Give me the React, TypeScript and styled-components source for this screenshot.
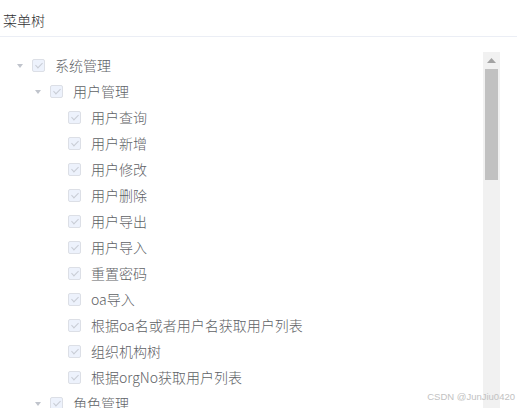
import React from "react";
import styled, { createGlobalStyle } from "styled-components";

const Global = createGlobalStyle`
  html, body { margin: 0; padding: 0; background: #fff; overflow: hidden; }
  body { font-family: "Liberation Sans", "Noto Sans CJK SC", sans-serif; }
`;

const Page = styled.div`
  position: relative;
  width: 517px;
  height: 408px;
  overflow: hidden;
  display: flex;
  flex-direction: column;
`;

const Header = styled.div`
  height: 37px;
  box-sizing: border-box;
  border-bottom: 1px solid #ebeef5;
  padding: 10px 0 0 3px;
  font-size: 14px;
  line-height: 20px;
  color: #303133;
  font-weight: 300;
  font-family: "Noto Sans CJK SC", sans-serif;
`;

const Body = styled.div`
  flex: 1;
  display: flex;
  padding-top: 15px;
  min-height: 0;
`;

const TreeArea = styled.div`
  width: 483px;
  overflow: hidden;
`;

const Scrollbar = styled.div`
  width: 17px;
  background: #f1f1f1;
  display: flex;
  flex-direction: column;
  align-items: center;
`;

const ArrowBtn = styled.div`
  height: 17px;
  width: 17px;
  display: flex;
  align-items: center;
  justify-content: center;
`;

const Thumb = styled.div`
  width: 13px;
  height: 111px;
  background: #c1c1c1;
`;

const Row = styled.div<{ $level: number }>`
  height: 26px;
  display: flex;
  align-items: center;
  padding-left: ${(p) => p.$level * 18 + 8}px;
  font-family: "Noto Sans CJK SC", sans-serif;
  font-weight: 300;
  font-size: 14px;
  color: #606266;
  white-space: nowrap;
`;

const Expand = styled.span<{ $leaf: boolean }>`
  width: 24px;
  height: 24px;
  display: flex;
  align-items: center;
  justify-content: center;
  visibility: ${(p) => (p.$leaf ? "hidden" : "visible")};
`;

const Caret = styled.span`
  width: 0;
  height: 0;
  border-left: 3.5px solid transparent;
  border-right: 3.5px solid transparent;
  border-top: 4px solid #c0c4cc;
  margin-top: 1px;
`;

const Check = styled.span`
  position: relative;
  width: 13px;
  height: 13px;
  box-sizing: border-box;
  border: 1px solid #dcdfe6;
  border-radius: 2px;
  background: #edf2fc;
  margin-right: 10px;
  flex-shrink: 0;
  &::after {
    content: "";
    position: absolute;
    left: 4px;
    top: 1px;
    width: 3px;
    height: 6px;
    border: 1px solid #c8ccd4;
    border-left: 0;
    border-top: 0;
    transform: rotate(45deg);
  }
`;

const Label = styled.span`
  line-height: 26px;
`;

const Watermark = styled.div`
  position: absolute;
  right: 2px;
  bottom: 6px;
  font-family: "Liberation Sans", sans-serif;
  font-size: 9.5px;
  color: #c2c2c2;
`;

type Node = { label: string; level: number; leaf: boolean };

const nodes: Node[] = [
  { label: "系统管理", level: 0, leaf: false },
  { label: "用户管理", level: 1, leaf: false },
  { label: "用户查询", level: 2, leaf: true },
  { label: "用户新增", level: 2, leaf: true },
  { label: "用户修改", level: 2, leaf: true },
  { label: "用户删除", level: 2, leaf: true },
  { label: "用户导出", level: 2, leaf: true },
  { label: "用户导入", level: 2, leaf: true },
  { label: "重置密码", level: 2, leaf: true },
  { label: "oa导入", level: 2, leaf: true },
  { label: "根据oa名或者用户名获取用户列表", level: 2, leaf: true },
  { label: "组织机构树", level: 2, leaf: true },
  { label: "根据orgNo获取用户列表", level: 2, leaf: true },
  { label: "角色管理", level: 1, leaf: false },
];

export default function App() {
  return (
    <Page>
      <Global />
      <Header>菜单树</Header>
      <Body>
        <TreeArea>
          {nodes.map((n, i) => (
            <Row key={i} $level={n.level}>
              <Expand $leaf={n.leaf}>
                <Caret />
              </Expand>
              <Check />
              <Label>{n.label}</Label>
            </Row>
          ))}
        </TreeArea>
        <Scrollbar>
          <ArrowBtn>
            <svg width="9" height="5" viewBox="0 0 9 5">
              <path d="M0 5 L4.5 0 L9 5 Z" fill="#a3a3a3" />
            </svg>
          </ArrowBtn>
          <Thumb />
        </Scrollbar>
      </Body>
      <Watermark>CSDN @JunJiu0420</Watermark>
    </Page>
  );
}
